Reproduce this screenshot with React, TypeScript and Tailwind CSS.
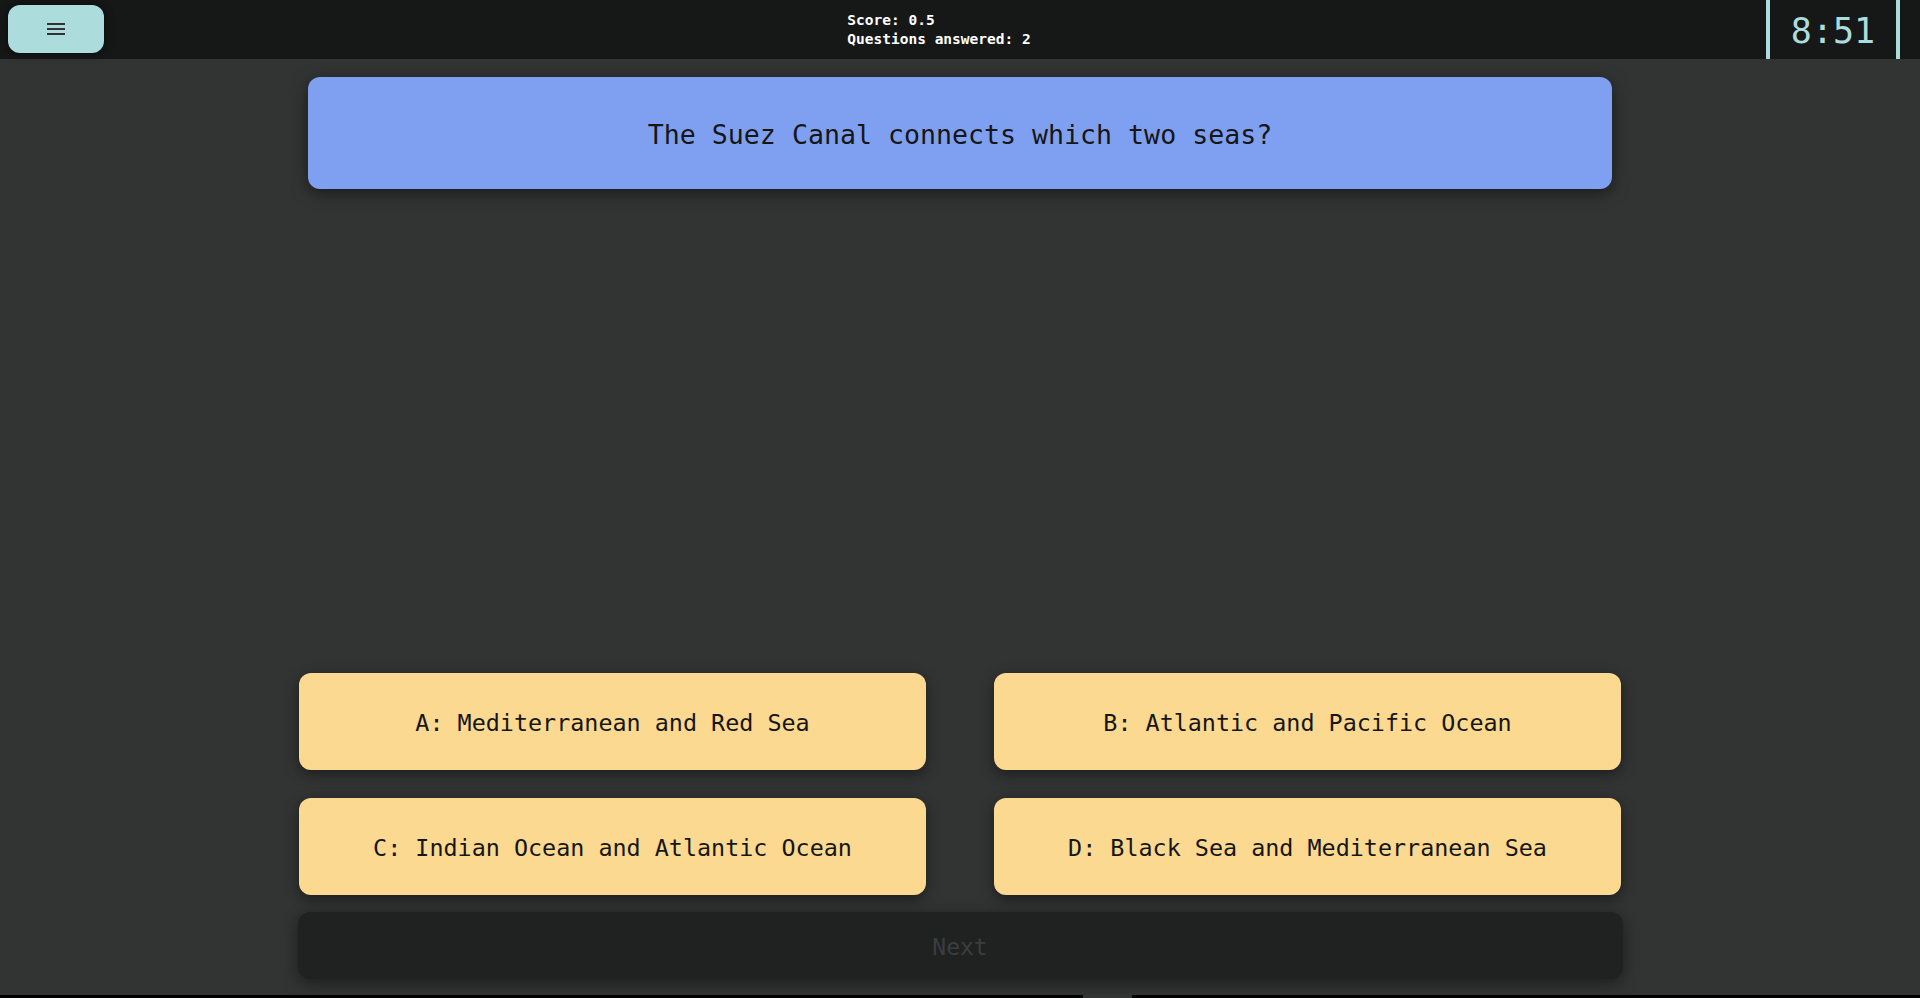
import React from "react";

const mono = { fontFamily: '"DejaVu Sans Mono", "Liberation Mono", monospace' };

function Answer({ text }: { text: string }) {
  return (
    <button
      className="h-[97px] w-full rounded-[12px] bg-[#fbd990] text-[23.4px] text-[#161616] shadow-[0_4px_14px_rgba(0,0,0,0.45)] flex items-center justify-center pt-[4px]"
      style={mono}
    >
      {text}
    </button>
  );
}

export default function App() {
  return (
    <div className="h-[998px] w-full bg-[#323434] flex flex-col overflow-hidden" style={mono}>
      <header className="h-[59px] shrink-0 bg-[#161818] flex items-start justify-between pl-[8px] pr-[20px]">
        <button className="mt-[5px] h-[48px] w-[96px] rounded-[12px] bg-[#acdcdc] flex flex-col items-center justify-center gap-[3px] shadow-[0_0_10px_rgba(0,0,0,0.6)]">
          <span className="block h-[2px] w-[18px] bg-[#333]" />
          <span className="block h-[2px] w-[18px] bg-[#333]" />
          <span className="block h-[2px] w-[18px] bg-[#333]" />
        </button>
        <div className="ml-[8px] pt-[11px] text-[14.5px] leading-[19px] font-bold text-white">
          <div>Score: 0.5</div>
          <div>Questions answered: 2</div>
        </div>
        <div className="h-[59px] w-[134px] border-x-[4px] border-[#acdcdc] flex items-center justify-center text-[35px] text-[#acdcdc] pt-[3px]">
          8:51
        </div>
      </header>

      <main className="flex-1 flex flex-col items-center">
        <div className="mt-[18px] h-[112px] w-[1304px] rounded-[12px] bg-[#7fa0f0] shadow-[0_4px_16px_rgba(0,0,0,0.5)] flex items-center justify-center text-[26.6px] text-[#161616] pt-[3px]">
          The Suez Canal connects which two seas?
        </div>

        <div className="mt-[484px] w-[1322px] grid grid-cols-2 gap-x-[68px] gap-y-[28px]">
          <Answer text="A: Mediterranean and Red Sea" />
          <Answer text="B: Atlantic and Pacific Ocean" />
          <Answer text="C: Indian Ocean and Atlantic Ocean" />
          <Answer text="D: Black Sea and Mediterranean Sea" />
        </div>

        <button className="mt-[17px] h-[67px] w-[1325px] rounded-[12px] bg-[#202121] shadow-[0_4px_16px_rgba(0,0,0,0.45)] flex items-center justify-center text-[23px] text-[#3b3e40] pt-[4px]">
          Next
        </button>
      </main>

      <div className="h-[3px] shrink-0 flex">
        <div className="w-[1083px] bg-black" />
        <div className="w-[49px] bg-[#323434]" />
        <div className="flex-1 bg-black" />
      </div>
    </div>
  );
}
